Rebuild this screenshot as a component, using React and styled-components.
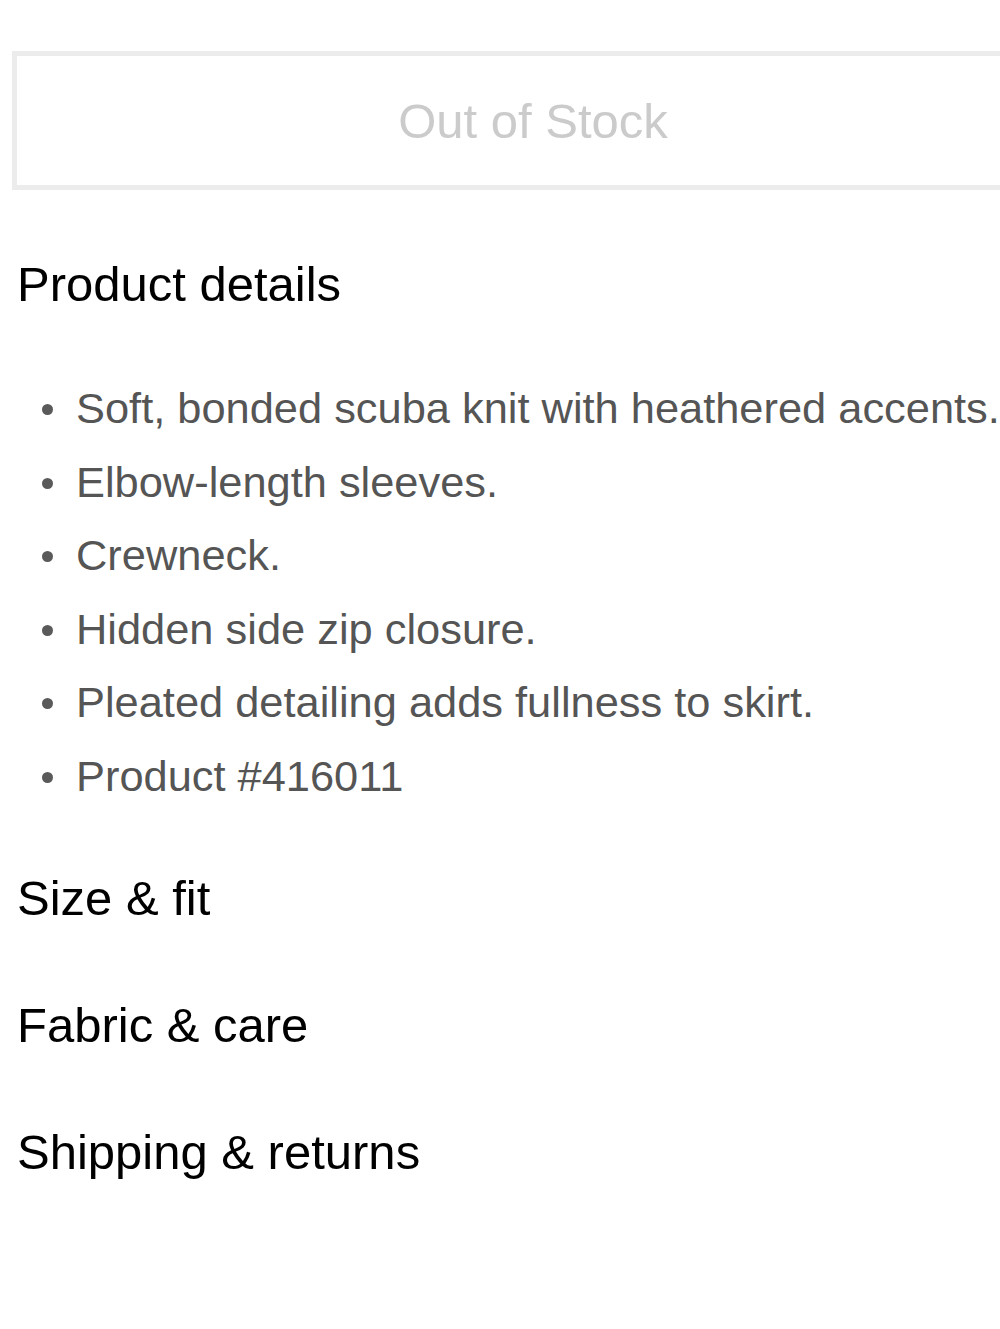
import React from "react";
import styled, { createGlobalStyle } from "styled-components";

const GlobalStyle = createGlobalStyle`
  body {
    margin: 0;
    background: #fff;
    font-family: "Liberation Sans", Arial, sans-serif;
    overflow-x: hidden;
  }
`;

const details = [
  "Soft, bonded scuba knit with heathered accents.",
  "Elbow-length sleeves.",
  "Crewneck.",
  "Hidden side zip closure.",
  "Pleated detailing adds fullness to skirt.",
  "Product #416011",
];

const sections = ["Size & fit", "Fabric & care", "Shipping & returns"];

const App = () => {
  return (
    <Viewport>
      <GlobalStyle />
      <Page>
        <StockButton disabled>Out of Stock</StockButton>
        <Accordion>
          <SectionTitle>Product details</SectionTitle>
          <DetailList>
            {details.map((item) => (
              <DetailItem key={item}>{item}</DetailItem>
            ))}
          </DetailList>
          {sections.map((title) => (
            <SectionTitle key={title} collapsed>
              {title}
            </SectionTitle>
          ))}
        </Accordion>
      </Page>
    </Viewport>
  );
};

const Viewport = styled.div`
  width: 1000px;
  min-height: 1329px;
  overflow: hidden;
`;

const Page = styled.div`
  width: 1066px;
  padding: 51px 12px 0;
  box-sizing: border-box;
`;

const StockButton = styled.button`
  display: block;
  width: 100%;
  height: 139px;
  border: 5px solid #ececec;
  background: #fff;
  color: #cbcbcb;
  font-family: "Liberation Sans", Arial, sans-serif;
  font-size: 49px;
  padding: 0;
  cursor: not-allowed;
`;

const Accordion = styled.div`
  padding-left: 5px;
  padding-top: 66px;
`;

const SectionTitle = styled.h2`
  margin: 0;
  font-size: 49px;
  font-weight: 400;
  color: #000;
  line-height: ${(props) => (props.collapsed ? "127px" : "56px")};
`;

const DetailList = styled.ul`
  list-style: none;
  margin: 60px 0 21px;
  padding: 0;
  color: #555;
  font-size: 43.4px;
  line-height: 73.6px;
`;

const DetailItem = styled.li`
  position: relative;
  padding-left: 59px;

  &::before {
    content: "";
    position: absolute;
    left: 25px;
    top: 32px;
    width: 11px;
    height: 11px;
    border-radius: 50%;
    background: #5a5a5a;
  }
`;

export default App;
